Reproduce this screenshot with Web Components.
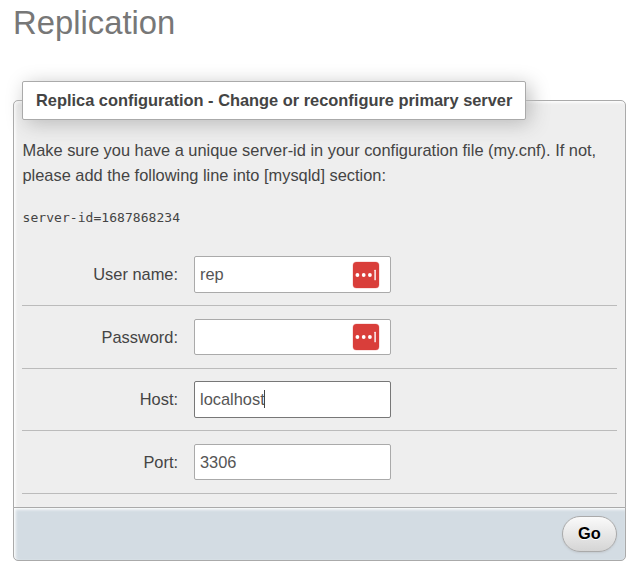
<!DOCTYPE html>
<html lang="en">
<head>
<meta charset="utf-8">
<title>Replication</title>
<style>
body{margin:0;width:633px;height:567px;overflow:hidden;background:#fff;color:#444;font:16.4px/25px "Liberation Sans",Arial,sans-serif}
</style>
</head>
<body>
<replication-page></replication-page>
<script>
class BaseElement extends HTMLElement{
  constructor(){
    super();
    this.attachShadow({mode:'open'}).innerHTML=this.render();
  }
}
customElements.define('page-title',class extends BaseElement{
  render(){return `<style>
    :host{display:block;height:81px;padding-left:13px;box-sizing:border-box}
    h2{margin:0;font-size:32.8px;line-height:46px;font-weight:400;color:#777;white-space:nowrap}
  </style><h2><slot></slot></h2>`}
});
customElements.define('config-panel',class extends BaseElement{
  render(){return `<style>
    :host{display:flex;flex-direction:column;margin:0 7px 0 13px}
    .body{box-sizing:border-box;height:408px;margin-top:19px;border:1px solid #aaa;border-radius:5px 5px 0 0;background:#eee;padding:0 8px;box-shadow:inset 1.5px 1.5px 3px #fff}
    .legend{box-sizing:border-box;width:504px;height:39px;margin-top:-20px;border:1px solid #aaa;border-radius:2px;background:#fff;box-shadow:4px 4px 20px #bbb;padding-left:13px;font-weight:700;line-height:36px;white-space:nowrap}
    .foot{box-sizing:border-box;height:54px;margin-top:-1px;border:1px solid #aaa;border-radius:0 0 5px 5px;background:#d3dce3;padding:8px 8px 0;display:flex;justify-content:flex-end;box-shadow:inset 1.5px 1.5px 3px #fff}
  </style><div class="body"><div class="legend"><slot name="legend"></slot></div><slot></slot></div><div class="foot"><slot name="footer"></slot></div>`}
});
customElements.define('server-note',class extends BaseElement{
  render(){return `<style>
    :host{display:block;height:124px;padding:18px 0 0 .5px;box-sizing:border-box;white-space:nowrap}
    p{margin:0}
    pre{margin:17px 0 0;font:13px/25px "DejaVu Sans Mono",monospace;letter-spacing:.05px}
  </style><p><slot></slot></p><pre><slot name="code"></slot></pre>`}
});
customElements.define('manager-badge',class extends BaseElement{
  render(){return `<style>
    :host{display:block;width:28px;height:28px}svg{display:block}
  </style><svg width="28" height="28" viewBox="0 0 28 28"><rect x=".5" y=".5" width="27" height="27" rx="4" fill="#f6caca"/><rect x="1" y="1" width="26" height="26" rx="3.5" fill="#d93e3a"/><g fill="#fff"><circle cx="5.4" cy="14" r="1.9"/><circle cx="11.7" cy="14" r="1.9"/><circle cx="17.9" cy="14" r="1.9"/><rect x="22.4" y="8.7" width="1.4" height="10.6" rx=".5"/></g></svg>`}
});
customElements.define('form-row',class extends BaseElement{
  render(){
    const on=n=>this.hasAttribute(n);
    return `<style>
    :host{display:flex;box-sizing:border-box;height:62px;padding-top:12px;border-bottom:1px solid #bbb}
    :host([tall]){height:63px;padding-top:13px}
    label{width:156px;margin-right:16px;text-align:right;line-height:37px;white-space:nowrap}
    .box{box-sizing:border-box;width:197px;height:37px;border:1px solid #aaa;border-radius:2px;background:#fff;padding:0 10px 0 5px;display:flex;align-items:center;color:#555;line-height:35px}
    :host([tall]) .box{height:36px}
    :host([focused]) .box{border-color:#777}
    .caret{width:1px;height:18px;margin:0 0 1px -1px;background:#444}
    manager-badge{margin-left:auto}
  </style><label>${this.getAttribute('label')}</label><div class="box"><slot></slot>${on('focused')?'<span class="caret"></span>':''}${on('badge')?'<manager-badge></manager-badge>':''}</div>`}
});
customElements.define('go-button',class extends BaseElement{
  render(){return `<style>
    :host{display:block;width:55px;height:36px}
    button{box-sizing:border-box;width:100%;height:100%;margin:0;padding:0 0 2px;border:1px solid #aaa;border-radius:18px;background:linear-gradient(#fafafa,#d5d5d5);color:#000;font:700 16.4px/32px "Liberation Sans",Arial,sans-serif;box-shadow:0 1px 2px #c3c9cf;text-shadow:0 1px 0 #fff}
  </style><button type="button"><slot></slot></button>`}
});
customElements.define('replication-page',class extends BaseElement{
  render(){return `<style>:host{display:block}</style>
  <page-title>Replication</page-title>
  <config-panel>
    <span slot="legend">Replica configuration - Change or reconfigure primary server</span>
    <server-note>Make sure you have a unique server-id in your configuration file (my.cnf). If not,<br>please add the following line into [mysqld] section:<span slot="code">server-id=1687868234</span></server-note>
    <form-row label="User name:" badge>rep</form-row>
    <form-row label="Password:" badge tall></form-row>
    <form-row label="Host:" focused>localhost</form-row>
    <form-row label="Port:" tall>3306</form-row>
    <go-button slot="footer">Go</go-button>
  </config-panel>`}
});
</script>
</body>
</html>
